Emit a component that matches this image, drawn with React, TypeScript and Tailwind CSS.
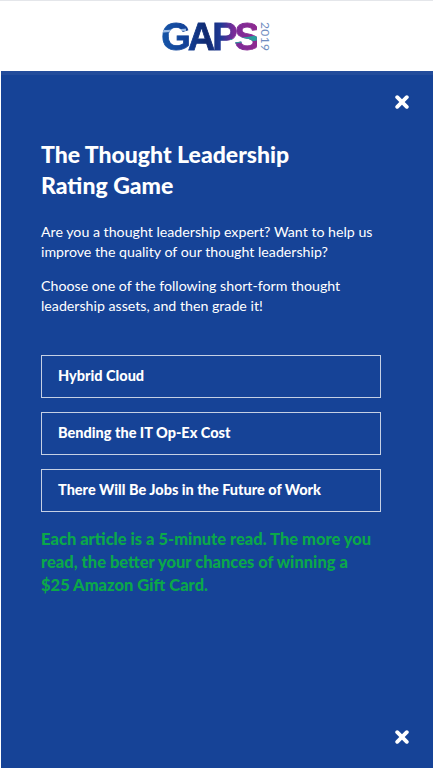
const font = { fontFamily: '"Lato", "Liberation Sans", sans-serif' };

function CloseIcon({ className }: { className: string }) {
  return (
    <svg className={className} width="14" height="14" viewBox="0 0 14 14" fill="none" stroke="white" strokeWidth="3.8" strokeLinecap="round">
      <path d="M2.2 2.2 11.8 11.8M11.8 2.2 2.2 11.8" />
    </svg>
  );
}

function Logo() {
  return (
    <div className="flex translate-y-[1px] items-center gap-[3px]">
      <span
        className="bg-[linear-gradient(172deg,transparent_0%,transparent_50%,#2a9d9c_52%,#2a9d9c_62%,transparent_64%),linear-gradient(176deg,transparent_0%,transparent_30%,#9dbde6_32%,#9dbde6_36%,transparent_38%),linear-gradient(90deg,#1656a8_0%,#123f96_28%,#10296f_48%,#1f3a96_62%,#7a2a98_76%,#8f2a90_100%)] bg-clip-text text-[38px] font-black leading-none tracking-[-3px] text-transparent [-webkit-text-stroke:0.8px_transparent] [background-position:100%_0,0_0,0_0] [background-repeat:no-repeat] [background-size:28%_100%,26%_100%,100%_100%]"
        style={{ fontFamily: '"Liberation Sans", sans-serif' }}
      >
        GAPS
      </span>
      <span className="w-[11px] text-[12px] leading-none tracking-[0.4px] text-[#6f8cc0] [writing-mode:vertical-rl]">2019</span>
    </div>
  );
}

function ArticleButton({ label }: { label: string }) {
  return (
    <button className="flex h-[43px] w-[340px] items-center border border-[#c5d0e4] pb-[1px] pl-4 text-left text-[14.5px] font-black text-white">
      {label}
    </button>
  );
}

export default function App() {
  return (
    <div className="flex h-[768px] w-[433px] flex-col overflow-hidden bg-white" style={font}>
      <header className="flex h-[71px] items-center justify-center border-t border-[#e4e6ea] pr-[1px]">
        <Logo />
      </header>
      <main className="relative ml-[1px] flex-1 border-t-4 border-[#234c9b] bg-[#164397] pl-10 pr-[52px] text-white">
        <CloseIcon className="absolute right-[24px] top-[20px]" />
        <h1 className="mt-[64px] w-[300px] text-[23px] font-black leading-[31px]">The Thought Leadership Rating Game</h1>
        <p className="mt-[21px] text-[14.2px] leading-[20px]">
          Are you a thought leadership expert? Want to help us improve the quality of our thought leadership?
        </p>
        <p className="mt-[14px] text-[14.2px] leading-[20px]">
          Choose one of the following short-form thought leadership assets, and then grade it!
        </p>
        <div className="mt-[39px] flex flex-col gap-[14px]">
          <ArticleButton label="Hybrid Cloud" />
          <ArticleButton label="Bending the IT Op-Ex Cost" />
          <ArticleButton label="There Will Be Jobs in the Future of Work" />
        </div>
        <p className="mt-[16px] w-[335px] text-[16.5px] font-black leading-[23px] text-[#0ba84a]">
          Each article is a 5-minute read. The more you read, the better your chances of winning a $25 Amazon Gift Card.
        </p>
        <CloseIcon className="absolute bottom-[24px] right-[24px]" />
      </main>
    </div>
  );
}
